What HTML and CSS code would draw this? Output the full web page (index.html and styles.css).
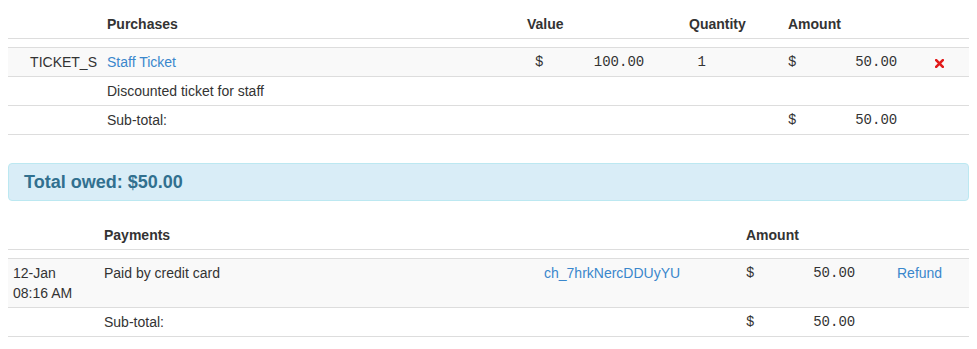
FILE: index.html
```html
<!DOCTYPE html>
<html>
<head>
<meta charset="utf-8">
<link rel="stylesheet" href="styles.css">
</head>
<body>
<table class="tbl purchases">
  <colgroup>
    <col class="p1"><col class="p2"><col class="p3"><col class="p4"><col class="p5"><col class="p6">
  </colgroup>
  <thead>
    <tr><th></th><th>Purchases</th><th>Value</th><th>Quantity</th><th>Amount</th><th></th></tr>
  </thead>
  <tbody>
    <tr class="spacer"><td colspan="6"></td></tr>
    <tr class="striped">
      <td class="code">TICKET_S</td>
      <td><a href="#">Staff Ticket</a></td>
      <td class="mono val">$      100.00</td>
      <td class="mono"> 1</td>
      <td class="mono">$       50.00</td>
      <td class="act"><svg class="xicon" width="9" height="9" viewBox="0 0 9 9"><path d="M1.2 1.2 L7.8 7.8 M7.8 1.2 L1.2 7.8" stroke="#e21b1b" stroke-width="2.6" stroke-linecap="square" fill="none"/></svg></td>
    </tr>
    <tr><td></td><td>Discounted ticket for staff</td><td></td><td></td><td></td><td></td></tr>
    <tr class="last"><td></td><td>Sub-total:</td><td></td><td></td><td class="mono">$       50.00</td><td></td></tr>
  </tbody>
</table>

<div class="alert">Total owed: $50.00</div>

<table class="tbl payments">
  <colgroup>
    <col class="q1"><col class="q2"><col class="q3"><col class="q4"><col class="q5">
  </colgroup>
  <thead>
    <tr><th></th><th>Payments</th><th></th><th>Amount</th><th></th></tr>
  </thead>
  <tbody>
    <tr class="spacer"><td colspan="5"></td></tr>
    <tr class="striped">
      <td>12-Jan<br>08:16 AM</td>
      <td>Paid by credit card</td>
      <td><a href="#">ch_7hrkNercDDUyYU</a></td>
      <td class="mono">$       50.00</td>
      <td><a href="#">Refund</a></td>
    </tr>
    <tr class="last"><td></td><td>Sub-total:</td><td></td><td class="mono">$       50.00</td><td></td></tr>
  </tbody>
</table>
</body>
</html>
```

FILE: styles.css
```css
body {
  margin: 8px;
  font-family: "Liberation Sans", Arial, sans-serif;
  font-size: 14px;
  line-height: 20px;
  color: #333;
  background: #fff;
}
a {
  color: #3a87cc;
  text-decoration: none;
}
.tbl {
  width: 100%;
  table-layout: fixed;
  border-collapse: separate;
  border-spacing: 0;
}
.tbl th {
  text-align: left;
  font-weight: bold;
  padding: 6px 5px 4px;
  border-bottom: 1px solid #ddd;
  vertical-align: bottom;
}
.tbl td {
  padding: 4px 5px;
  border-top: 1px solid #ddd;
  vertical-align: top;
  white-space: nowrap;
  overflow: hidden;
}
.tbl .spacer td {
  border-top: 0;
  padding: 0;
  height: 8px;
}
.tbl .last td {
  border-bottom: 1px solid #ddd;
}
.tbl .striped td {
  background: #f9f9f9;
}
.p1 { width: 94px; }
.p2 { width: 420px; }
.p3 { width: 162px; }
.p4 { width: 99px; }
.p5 { width: 137px; }
.p6 { width: 49px; }
.q1 { width: 91px; }
.q2 { width: 440px; }
.q3 { width: 202px; }
.q4 { width: 151px; }
.q5 { width: 77px; }
.tbl td.code {
  text-align: right;
}
.tbl td.mono {
  font-family: "Liberation Mono", "DejaVu Sans Mono", monospace;
  font-size: 14px;
  white-space: pre;
}
.tbl td.val {
  padding-left: 13px;
}
.tbl td.act {
  padding-left: 15px;
}
.xicon {
  display: block;
  margin-top: 7px;
}
.alert {
  margin-top: 28px;
  margin-bottom: 18px;
  padding: 8px 15px;
  border: 1px solid #bce8f1;
  border-radius: 4px;
  background: #d9edf7;
  color: #31708f;
  font-size: 18px;
  font-weight: bold;
  line-height: 20px;
}
```
